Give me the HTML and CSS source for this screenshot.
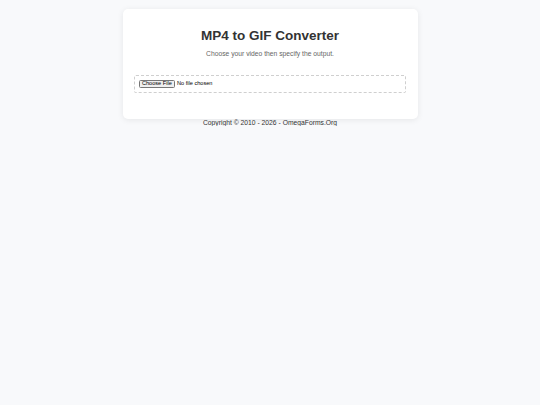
FILE: index.html
```html
<!DOCTYPE html>
<html lang="en">
<head>
<meta charset="utf-8">
<title>MP4 to GIF Converter</title>
<link rel="stylesheet" href="styles.css">
</head>
<body>
<main class="card">
  <h1 class="title">MP4 to GIF Converter</h1>
  <p class="subtitle">Choose your video then specify the output.</p>
  <div class="dropzone">
    <input class="file" type="file" accept="video/mp4">
  </div>
</main>
<footer class="footer">Copyright © 2010 - 2026 - OmegaForms.Org</footer>
</body>
</html>
```
FILE: styles.css
```css
html, body {
  margin: 0;
  padding: 0;
}
body {
  background: #f8f9fb;
  font-family: "Liberation Sans", Arial, sans-serif;
  color: #333;
  padding-top: 9px;
}
.card {
  box-sizing: border-box;
  width: 295px;
  height: 110px;
  margin: 0 auto;
  background: #fff;
  border-radius: 5px;
  box-shadow: 0 1px 6px rgba(0, 0, 0, 0.08);
  padding: 11.25px;
  text-align: center;
}
.title {
  font-size: 13.5px;
  font-weight: bold;
  color: #333;
  margin: 7.5px 0 0;
  line-height: normal;
}
.subtitle {
  font-size: 6.75px;
  color: #666;
  margin: 7.1px 0 0;
  line-height: normal;
}
.dropzone {
  box-sizing: border-box;
  margin-top: 17.8px;
  height: 18px;
  border: 1px dashed #cfcfcf;
  border-radius: 2px;
  padding: 0 4px;
  text-align: left;
  display: flex;
  align-items: center;
}
.file {
  font-family: "Liberation Sans", Arial, sans-serif;
  font-size: 5.6px;
  color: #000;
}
.file::file-selector-button {
  font-family: "Liberation Sans", Arial, sans-serif;
  font-size: 5.6px;
  height: 8px;
  padding: 0 2.2px;
  margin-right: 2px;
  border: 0.6px solid #767676;
  border-radius: 1.5px;
  background: #efefef;
  color: #000;
  line-height: 1;
}
.footer {
  text-align: center;
  font-size: 6.75px;
  color: #333;
  line-height: normal;
  padding-top: 0.4px;
}
```
